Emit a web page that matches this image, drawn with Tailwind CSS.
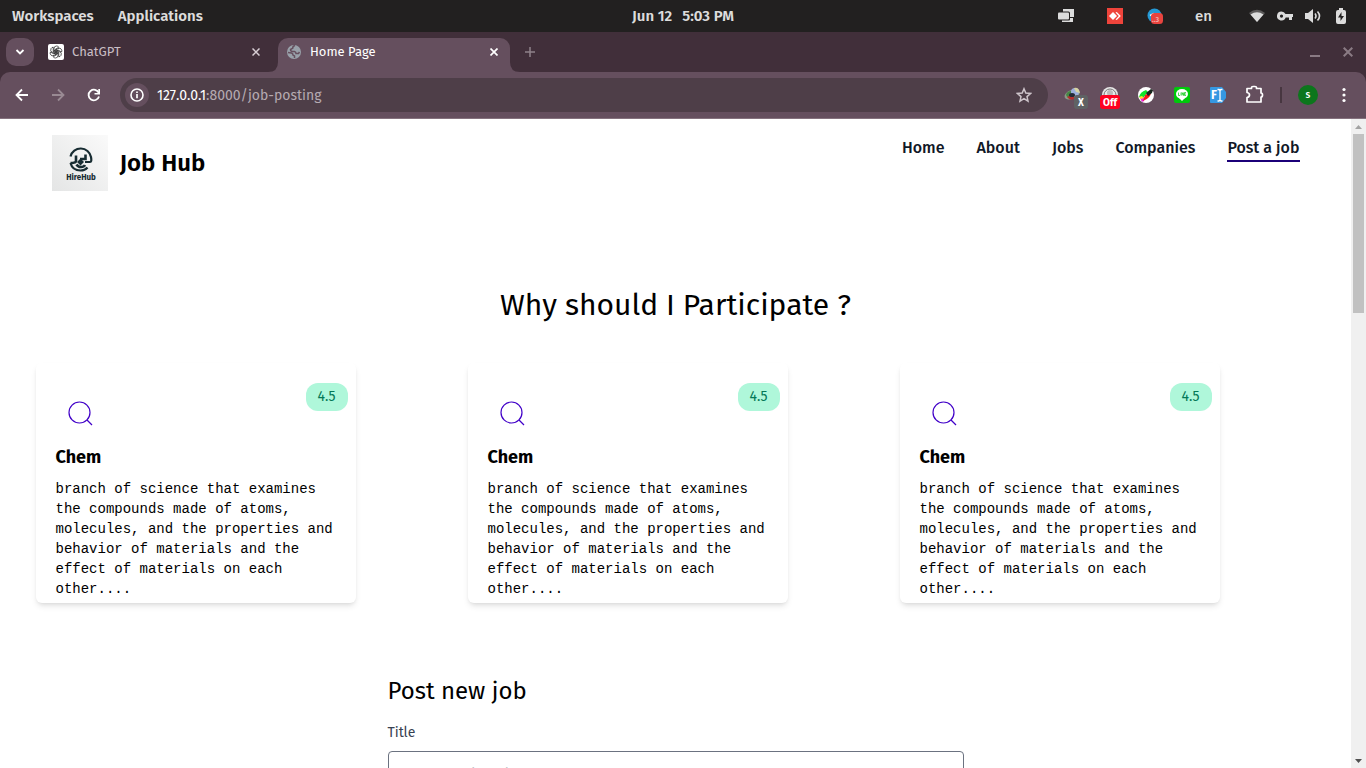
<!DOCTYPE html>
<html lang="en">
<head>
<meta charset="utf-8">
<meta name="viewport" content="width=device-width, initial-scale=1">
<title>Home Page</title>
<script src="https://cdn.jsdelivr.net/npm/@tailwindcss/browser@4"></script>
</head>
<body class="flex h-screen flex-col overflow-hidden bg-white font-['Fira_Sans',Roboto,sans-serif] text-black">

<!-- Desktop panel -->
<header class="grid h-8 shrink-0 grid-cols-3 items-center bg-[#222020] px-3 text-[15px] font-semibold text-[#dcdcdc]">
  <div class="flex gap-6"><button>Workspaces</button><button>Applications</button></div>
  <button class="flex justify-center gap-2.5"><span>Jun 12</span><span>5:03 PM</span></button>
  <div class="flex items-center justify-end pr-[5px]">
    <button aria-label="Windows" class="mr-8"><svg class="block" width="18" height="16" viewBox="0 0 18 16"><path fill="#dcdcdc" d="M6 1h11v8h-4V5q0-1.500-1.500-1.500H6z"/><rect x="1" y="4.500" width="11" height="7" rx="1" fill="#dcdcdc"/><path fill="#dcdcdc" d="M13 10h3v4H5v-1.500h7q1 0 1-1z"/></svg></button>
    <button aria-label="AnyDesk" class="mr-6"><svg class="block" width="16" height="16" viewBox="0 0 16 16"><rect width="16" height="16" fill="#ef443b"/><path fill="#fff" d="M6 4l4 4-4 4-4-4zM8.500 4.500L9.800 4l4 4-4 4-1.300-.5L11.800 8z"/></svg></button>
    <button aria-label="Telegram, 3 unread" class="mr-8"><svg class="block" width="16" height="16" viewBox="0 0 16 16"><circle cx="7.500" cy="7.500" r="7" fill="#2599d5"/><path d="M3 7.500l4-2" stroke="#fff" stroke-width="1.500"/><rect x="4" y="5" width="12" height="11" rx="3.500" fill="#e9443f"/><text x="5" y="14" font-size="7" fill="#f4b5b0">..3</text></svg></button>
    <button class="mr-[37px] font-medium">en</button>
    <button aria-label="Wi-Fi" class="mr-3"><svg class="block" width="16" height="16" viewBox="0 0 16 16"><path fill="#5b5959" d="M0 5Q8-1.500 16 5L8 14z"/><path fill="#dcdcdc" d="M1.500 6.500Q8 2 14.500 6.500L8 14z"/></svg></button>
    <button aria-label="VPN" class="mr-3"><svg class="block" width="16" height="16" viewBox="0 0 16 16"><path fill="#dcdcdc" fill-rule="evenodd" d="M4.500 3.500a4.500 4.500 0 014 2.500H16v3h-1v3h-3V9.500H8.700A4.500 4.500 0 114.500 3.500zm0 3a1.600 1.600 0 100 3.200 1.600 1.600 0 000-3.200z"/></svg></button>
    <button aria-label="Volume" class="mr-3"><svg class="block" width="16" height="16" viewBox="0 0 16 16"><path fill="#dcdcdc" d="M0 5h3l5-4v14l-5-4H0z"/><path fill="none" stroke="#dcdcdc" stroke-width="1.600" d="M10 5.500q2 2.500 0 5M12.500 3.500q4 4.500 0 9"/></svg></button>
    <button aria-label="Battery"><svg class="block" width="16" height="16" viewBox="0 0 16 16"><path fill="#dcdcdc" d="M6 0h4v2h1q2 0 2 2v10q0 2-2 2H5q-2 0-2-2V4q0-2 2-2h1z"/><path fill="#222020" d="M8.500 4v4H11l-3.500 5V9.500H5z"/></svg></button>
  </div>
</header>

<!-- Tab strip -->
<div class="flex h-10 shrink-0 items-end bg-[#412f3a] pl-1.5 text-[13px]">
  <button aria-label="Search tabs" class="mb-1.5 flex size-7 items-center justify-center rounded-[10px] bg-[#654f5e]"><svg width="10" height="8" viewBox="0 0 10 8"><path d="M1.500 2L5 5.500 8.500 2" fill="none" stroke="#fff" stroke-width="1.800"/></svg></button>
  <div class="flex h-10 w-[234px] items-center pl-3.5 text-[#c9bec5]">
    <svg width="16" height="16" viewBox="0 0 16 16"><rect width="16" height="16" rx="2" fill="#fff"/><g fill="none" stroke="#222" stroke-width="0.700"><path id="petal" d="M6 9.200V4.800Q6 2 8.500 2q1.500 0 2.300 1.200L7.200 5.300v3.900"/><use href="#petal" transform="rotate(60 8 8)"/><use href="#petal" transform="rotate(120 8 8)"/><use href="#petal" transform="rotate(180 8 8)"/><use href="#petal" transform="rotate(240 8 8)"/><use href="#petal" transform="rotate(300 8 8)"/></g></svg>
    <span class="ml-2 grow">ChatGPT</span>
    <button aria-label="Close ChatGPT" class="mr-2"><svg class="block" width="8" height="8" viewBox="0 0 8 8"><path d="M.5.5l7 7m0-7l-7 7" stroke="#d8ced4" stroke-width="1.500"/></svg></button>
  </div>
  <svg class="w-2.5" height="10" viewBox="0 0 10 10"><path d="M10 0v10H0Q10 10 10 0" fill="#654f5e"/></svg>
  <div class="flex h-[34px] w-[232px] items-center rounded-t-[10px] bg-[#654f5e] pb-1.5 pl-2 text-white">
    <svg width="16" height="16" viewBox="0 0 16 16"><circle cx="8" cy="8" r="7" fill="#99a1aa"/><path d="M9 1.500Q6.500 2 6.800 4.200L4.500 5.500q0 2 2 2h2q1.500.3 1.500 2h2.500l1-1.500M2 8.500l3.500.5q1.500.5 1.500 2l1.500 1v2" fill="none" stroke="#654f5e" stroke-width="1.500"/></svg>
    <span class="ml-2 grow">Home Page</span>
    <button aria-label="Close Home Page" class="mr-3"><svg class="block" width="8" height="8" viewBox="0 0 8 8"><path d="M.5.5l7 7m0-7l-7 7" stroke="#fff" stroke-width="1.700"/></svg></button>
  </div>
  <svg class="w-2.5" height="10" viewBox="0 0 10 10"><path d="M0 0v10h10Q0 10 0 0" fill="#654f5e"/></svg>
  <button aria-label="New tab" class="mb-[15px] ml-[5px]"><svg class="block" width="10" height="10" viewBox="0 0 10 10"><path d="M5 0v10M0 5h10" stroke="#8f828a" stroke-width="1.500"/></svg></button>
  <div class="mb-[15px] ml-auto mr-[13px] flex gap-[23px]">
    <button aria-label="Minimize"><svg class="block" width="10" height="10" viewBox="0 0 10 10"><path d="M0 9h10" stroke="#8a7b84" stroke-width="2"/></svg></button>
    <button aria-label="Close window"><svg class="block" width="10" height="10" viewBox="0 0 10 10"><path d="M.7.7l8.600 8.600m0-8.600L.7 9.300" stroke="#8a7b84" stroke-width="2"/></svg></button>
  </div>
</div>

<!-- Toolbar -->
<div class="shrink-0 bg-[#412f3a]">
<div class="flex h-[47px] items-center rounded-t-[10px] border-b border-[#85727e] bg-[#654f5e] pl-3.5">
  <button aria-label="Back"><svg class="block" width="16" height="16" viewBox="0 0 16 16"><path d="M14 8H3M8 2.500L2.500 8 8 13.500" fill="none" stroke="#fff" stroke-width="1.800"/></svg></button>
  <button aria-label="Forward" class="ml-5"><svg class="block" width="16" height="16" viewBox="0 0 16 16"><path d="M2 8h11M8 2.500L13.500 8 8 13.500" fill="none" stroke="#998a93" stroke-width="1.800"/></svg></button>
  <button aria-label="Reload" class="ml-5"><svg class="block" width="16" height="16" viewBox="0 0 16 16"><path d="M12.800 6A5.300 5.300 0 1013 9.500" fill="none" stroke="#fff" stroke-width="1.800"/><path d="M14 2v5.500H8.500V6h3.800V2z" fill="#fff"/></svg></button>
  <div class="ml-[18px] flex h-[34px] grow items-center rounded-full bg-[#4e3e48] pl-[5px] pr-4">
    <button aria-label="Site information" class="flex size-6 items-center justify-center rounded-full bg-[#654f5e]"><svg width="14" height="14" viewBox="0 0 14 14"><circle cx="7" cy="7" r="6" fill="none" stroke="#fff" stroke-width="1.600"/><path d="M7 6v4.200M7 3.500V5" stroke="#fff" stroke-width="1.700"/></svg></button>
    <a href="#" class="ml-2 grow pt-0.5 text-sm text-[#b5aab1]"><span class="text-white">127.0.0.1</span>:8000/job-posting</a>
    <button aria-label="Bookmark"><svg class="block" width="16" height="16" viewBox="0 0 16 16"><path d="M8 1.800l1.800 4.300 4.700.4L11 9.600l1 4.600-4-2.500-4 2.500 1-4.600-3.500-3.100 4.700-.4z" fill="none" stroke="#cdc4ca" stroke-width="1.500"/></svg></button>
  </div>
  <div class="ml-3.5 flex items-center gap-3">
    <button aria-label="Extension, X"><svg class="block overflow-visible" width="24" height="24" viewBox="0 0 24 24"><ellipse cx="10" cy="11.500" rx="8" ry="4.500" fill="#8b9a87" transform="rotate(-20 10 11)"/><circle cx="13" cy="9" r="4" fill="#9db0dc"/><path d="M4 12q1-4 5-4v7q-4 0-5-3" fill="#468744"/><path d="M5 14q3 4 7 2v-3H7z" fill="#b6302c"/><ellipse cx="10" cy="12" rx="3" ry="2" fill="#242a36"/><path d="M12 5q5-1 6 5l-4-1z" fill="#d7d4a0"/><rect x="12" y="12" width="14" height="14" rx="3" fill="#5f6264"/><text x="19" y="22.500" text-anchor="middle" font-size="10" font-weight="700" fill="#fff">X</text></svg></button>
    <button aria-label="Extension, off"><svg class="block overflow-visible" width="24" height="24" viewBox="0 0 24 24"><circle cx="12" cy="12" r="8" fill="#e8e8e8"/><path d="M6 12a6 6 0 0112 0" fill="none" stroke="#777" stroke-width="1"/><circle cx="12" cy="10" r="3" fill="#bbb"/><rect x="2" y="12" width="20" height="14" rx="3" fill="#ff0020"/><text x="12" y="22.500" text-anchor="middle" font-size="10" font-weight="700" fill="#fff">Off</text></svg></button>
    <button aria-label="Color picker"><svg class="block" width="24" height="24" viewBox="0 0 24 24"><circle cx="12" cy="12" r="8" fill="#fff"/><path d="M5 14q1-5 7-7l2 2-5 6z" fill="#0ee62a"/><path d="M6 15l4-1 1 2-2 3q-2-1-3-4z" fill="#ef22dc"/><path d="M5 14l3-1 2 2-3 1z" fill="#ffe02a"/><path d="M9 18l2-6 6-3q0 6-8 9" fill="#f51919"/><path d="M12 10l5-4 2 1-1 3-4 3z" fill="#16251b"/></svg></button>
    <button aria-label="LINE"><svg class="block" width="24" height="24" viewBox="0 0 24 24"><rect x="4" y="4" width="16" height="16" rx="2" fill="#00c90b"/><ellipse cx="12" cy="11" rx="6" ry="5" fill="#fff"/><path d="M9 15h6l-3 3z" fill="#fff"/><path d="M8.500 9.500v3H10m1-3v3m1 0v-3l1.500 3v-3m2.500 0h-1.500v3H16m-1.500-1.500H16" fill="none" stroke="#00c90b" stroke-width=".7"/></svg></button>
    <button aria-label="Font finder"><svg class="block" width="24" height="24" viewBox="0 0 24 24"><path d="M5 4h11l4 5v6l-4 5H5q-1 0-1-1V5q0-1 1-1" fill="#3598e2"/><text x="5" y="16" font-size="12" font-weight="700" fill="#fff">F</text><path d="M11.500 6.500h1.500l1 1 1-1h1.500M14 7v10m-2.500 1H13l1-1 1 1h1.500" fill="none" stroke="#fff" stroke-width="1.300"/></svg></button>
    <button aria-label="Extensions"><svg class="block" width="24" height="24" viewBox="0 0 24 24"><path d="M5 5.500h4.500V4.500q0-1 1.500-1h2q1.500 0 1.500 1v1H19v4.500q1.500 0 1.500 2t-1.500 2v5H5v-4.500q2.500-.5 2.500-2.500T5 9.500z" fill="none" stroke="#fff" stroke-width="1.700" stroke-linejoin="round"/></svg></button>
  </div>
  <div class="ml-[14px] h-4 w-0.5 bg-[#473640]"></div>
  <button aria-label="Profile" class="ml-4 flex size-5 items-center justify-center rounded-full bg-[#0c761c] text-[10px] font-medium text-white">s</button>
  <button aria-label="Menu" class="ml-[18px] mr-3.5"><svg class="block" width="16" height="16" viewBox="0 0 16 16"><g fill="#fff"><circle cx="8" cy="2.500" r="1.600"/><circle cx="8" cy="8" r="1.600"/><circle cx="8" cy="13.500" r="1.600"/></g></svg></button>
</div>
</div>

<!-- Page and scroll bar -->
<div class="flex min-h-0 grow">
<div class="min-w-0 grow overflow-hidden">
  <div class="mx-auto flex max-w-7xl items-start justify-between px-4 pt-4">
    <a href="#" class="flex items-center gap-3">
      <svg width="56" height="56" viewBox="0 0 56 56" role="img" aria-label="HireHub"><defs><linearGradient id="tile" x1="1" y1="0" x2="0" y2="1"><stop stop-color="#fafafa"/><stop offset="1" stop-color="#e4e5e5"/></linearGradient></defs><rect width="56" height="56" fill="url(#tile)"/><g fill="none" stroke="#172c32" stroke-width="2.200"><path d="M18.500 21.500A10.500 10.500 0 0139 22q1 5-1 5h-5M18.500 28q2 7.500 10 7.500 4.500 0 7-3"/><path d="M24 20.500v5.500q0 2-5.500 2M33.500 19.500v4.500H28M24.500 29.500q1.500 2.500 4.500 2.500t4-2" stroke-width="2.600"/></g><path d="M28.500 23.500l3.500 3.500-3.500 3.500-3.500-3.500z" fill="#172c32"/><text x="29" y="45" text-anchor="middle" font-size="8" font-weight="700" fill="#172c32">HireHub</text></svg>
      <span class="text-2xl font-semibold">Job Hub</span>
    </a>
    <nav class="flex gap-8 pt-px font-medium text-[#111827]">
      <a href="#" class="border-b-2 border-transparent">Home</a>
      <a href="#" class="border-b-2 border-transparent">About</a>
      <a href="#" class="border-b-2 border-transparent">Jobs</a>
      <a href="#" class="border-b-2 border-transparent">Companies</a>
      <a href="#" class="border-b-2 border-[#1b0078]">Post a job</a>
    </nav>
  </div>

  <h1 class="mt-24 text-center text-3xl">Why should I Participate ?</h1>

  <div class="mx-auto mt-10 grid max-w-7xl grid-cols-3 gap-4">
    <article class="relative h-60 w-80 rounded-md px-5 pt-8 shadow-md">
      <span class="absolute right-2 top-5 rounded-xl bg-[#aff7da] px-3 py-1 text-sm text-[#047857]">4.5</span>
      <svg class="ml-2" width="36" height="36" viewBox="0 0 36 36" fill="none" stroke="#4100c8" stroke-width="1.200"><circle cx="15.500" cy="17.500" r="10.500"/><path d="M23 25l5 5"/></svg>
      <h2 class="mt-3 text-lg font-bold">Chem</h2>
      <p class="mt-2 font-['Liberation_Mono',monospace] text-sm">branch of science that examines the compounds made of atoms, molecules, and the properties and behavior of materials and the effect of materials on each other....</p>
    </article>
    <article class="relative h-60 w-80 rounded-md px-5 pt-8 shadow-md">
      <span class="absolute right-2 top-5 rounded-xl bg-[#aff7da] px-3 py-1 text-sm text-[#047857]">4.5</span>
      <svg class="ml-2" width="36" height="36" viewBox="0 0 36 36" fill="none" stroke="#4100c8" stroke-width="1.200"><circle cx="15.500" cy="17.500" r="10.500"/><path d="M23 25l5 5"/></svg>
      <h2 class="mt-3 text-lg font-bold">Chem</h2>
      <p class="mt-2 font-['Liberation_Mono',monospace] text-sm">branch of science that examines the compounds made of atoms, molecules, and the properties and behavior of materials and the effect of materials on each other....</p>
    </article>
    <article class="relative h-60 w-80 rounded-md px-5 pt-8 shadow-md">
      <span class="absolute right-2 top-5 rounded-xl bg-[#aff7da] px-3 py-1 text-sm text-[#047857]">4.5</span>
      <svg class="ml-2" width="36" height="36" viewBox="0 0 36 36" fill="none" stroke="#4100c8" stroke-width="1.200"><circle cx="15.500" cy="17.500" r="10.500"/><path d="M23 25l5 5"/></svg>
      <h2 class="mt-3 text-lg font-bold">Chem</h2>
      <p class="mt-2 font-['Liberation_Mono',monospace] text-sm">branch of science that examines the compounds made of atoms, molecules, and the properties and behavior of materials and the effect of materials on each other....</p>
    </article>
  </div>

  <form class="mx-auto mt-[72px] max-w-xl">
    <h2 class="text-2xl">Post new job</h2>
    <label for="title" class="mt-4 block text-sm text-[#374151]">Title</label>
    <input id="title" type="text" placeholder="Enter the job title" class="mt-2 block h-12 w-full rounded border border-[#6b7280] px-3 text-base placeholder:text-gray-500">
  </form>
</div>
<div class="flex w-[15px] shrink-0 flex-col items-center bg-[#f0f0f0]">
  <button aria-label="Scroll up" class="flex h-[15px] items-center"><svg width="7" height="4" viewBox="0 0 7 4"><path d="M0 4l3.500-4L7 4z" fill="#a3a3a3"/></svg></button>
  <div class="h-[179px] w-[11px] bg-[#c1c1c1]"></div>
  <button aria-label="Scroll down" class="mt-auto flex h-[15px] items-center"><svg width="7" height="4" viewBox="0 0 7 4"><path d="M0 0l3.500 4L7 0z" fill="#505050"/></svg></button>
</div>
</div>
</body>
</html>
